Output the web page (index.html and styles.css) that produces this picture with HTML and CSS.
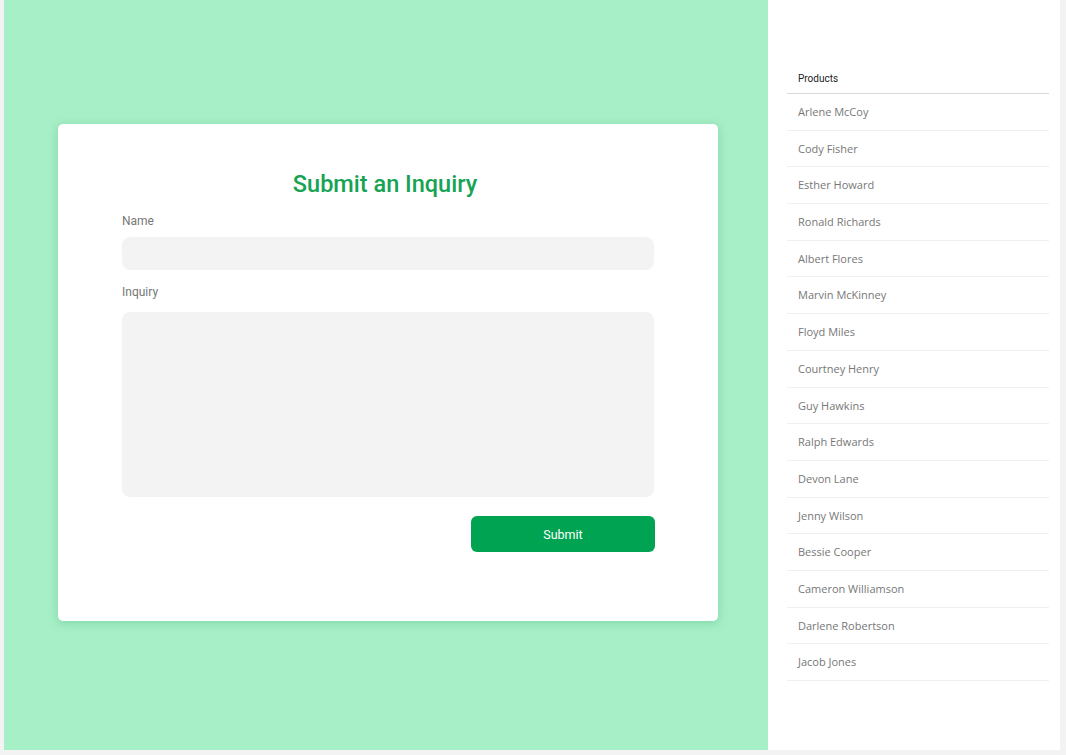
FILE: index.html
```html
<!DOCTYPE html>
<html>
<head>
<meta charset="utf-8">
<link rel="stylesheet" href="styles.css">
</head>
<body>
<div class="page">
  <main class="main">
    <form class="card">
      <h1 class="title">Submit an Inquiry</h1>
      <label class="label">Name</label>
      <div class="input"></div>
      <label class="label label-2">Inquiry</label>
      <div class="textarea"></div>
      <div class="actions"><button type="button" class="btn">Submit</button></div>
    </form>
  </main>
  <aside class="side">
    <div class="list">
      <div class="list-head">Products</div>
      <div class="row">Arlene McCoy</div>
      <div class="row">Cody Fisher</div>
      <div class="row">Esther Howard</div>
      <div class="row">Ronald Richards</div>
      <div class="row">Albert Flores</div>
      <div class="row">Marvin McKinney</div>
      <div class="row">Floyd Miles</div>
      <div class="row">Courtney Henry</div>
      <div class="row">Guy Hawkins</div>
      <div class="row">Ralph Edwards</div>
      <div class="row">Devon Lane</div>
      <div class="row">Jenny Wilson</div>
      <div class="row">Bessie Cooper</div>
      <div class="row">Cameron Williamson</div>
      <div class="row">Darlene Robertson</div>
      <div class="row">Jacob Jones</div>
    </div>
  </aside>
</div>
</body>
</html>
```
FILE: styles.css
```css
html, body { margin: 0; padding: 0; }
body {
  background: #f3f3f3;
  font-family: Roboto, "Liberation Sans", sans-serif;
  width: 1066px;
  height: 755px;
  overflow: hidden;
}
.page {
  display: flex;
  height: 750px;
  padding: 0 6px 0 4px;
}
.main {
  width: 764px;
  background: #a7efc7;
  padding: 124px 0 0 54px;
  box-sizing: border-box;
}
.card {
  width: 660px;
  height: 497px;
  box-sizing: border-box;
  background: #fff;
  border-radius: 5px;
  box-shadow: 0 2px 10px rgba(60, 170, 110, 0.35);
  padding: 46px 64px 0 64px;
  display: flex;
  flex-direction: column;
}
.title {
  margin: 0;
  padding-right: 6px;
  text-align: center;
  font-weight: 500;
  font-size: 23.5px;
  line-height: 28px;
  color: #16a354;
}
.label {
  font-size: 12px;
  line-height: 16px;
  color: #777;
  margin-top: 15px;
}
.label-2 { margin-top: 14px; }
.input {
  margin-top: 8px;
  height: 33px;
  border-radius: 8px;
  background: #f3f3f3;
}
.textarea {
  margin-top: 12px;
  height: 185px;
  border-radius: 8px;
  background: #f3f3f3;
}
.actions {
  display: flex;
  justify-content: flex-end;
  margin-top: 19px;
  margin-right: -1px;
}
.btn {
  width: 184px;
  height: 36px;
  border: 0;
  border-radius: 6px;
  background: #00a351;
  color: #fff;
  font-family: Roboto, "Liberation Sans", sans-serif;
  font-weight: 400;
  font-size: 12.5px;
}
.side {
  width: 292px;
  background: #fff;
  padding: 63px 11px 0 19px;
  box-sizing: border-box;
}
.list-head {
  font-family: Roboto, "Liberation Sans", sans-serif;
  font-size: 10px;
  font-weight: 400;
  color: #222;
  padding: 10px 11px 8px;
  line-height: 12px;
  border-bottom: 1px solid #d8d8d8;
}
.row {
  font-family: "Open Sans", "Noto Sans", sans-serif;
  font-size: 11px;
  color: #777;
  height: 36.7px;
  line-height: 36.7px;
  padding-left: 11px;
  border-bottom: 1px solid #efefef;
  box-sizing: border-box;
}
```
